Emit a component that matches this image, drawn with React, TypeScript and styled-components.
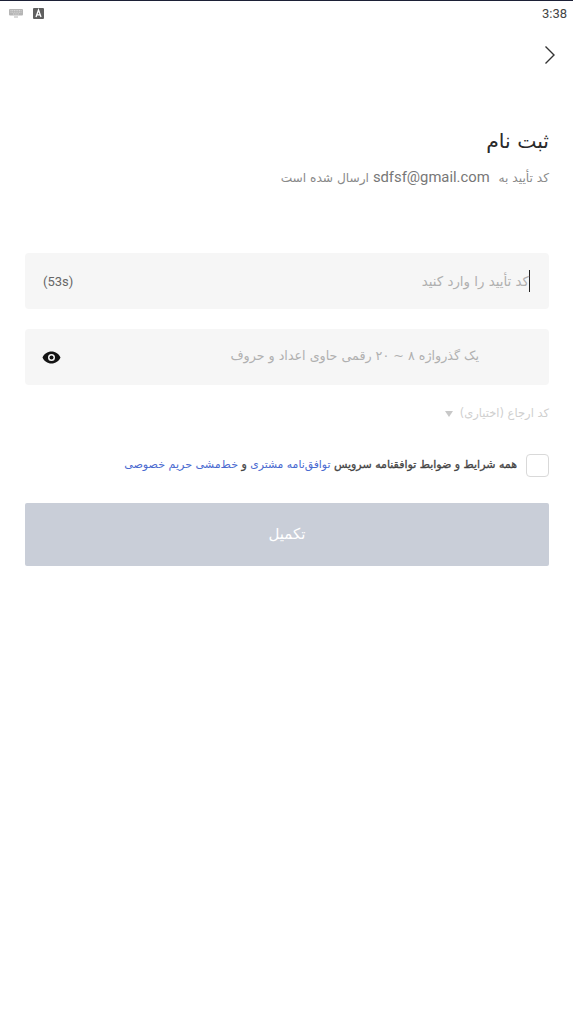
import styled, { createGlobalStyle } from "styled-components";

const GlobalStyle = createGlobalStyle`
  html, body {
    margin: 0;
    padding: 0;
    background: #fff;
  }
  body {
    font-family: Roboto, "DejaVu Sans", sans-serif;
  }
`;

const KeyboardIcon = () => (
  <svg width="14" height="9" viewBox="0 0 14 9" fill="#b5b5b5">
    <rect x="0" y="0" width="14" height="6.5" rx="1" />
    <path d="M1.5 1.5h11M1.5 3.2h11M4 5h6" stroke="#e6e6e6" strokeWidth=".7" strokeDasharray="1 .7" />
    <rect x="5" y="7.5" width="4" height="1" />
  </svg>
);

const InputMethodIcon = () => (
  <svg width="11" height="11" viewBox="0 0 11 11">
    <rect width="11" height="11" rx="1" fill="#5f5f5f" />
    <path d="M3 9 5.5 2 8 9M4 6.8h3" fill="none" stroke="#fff" strokeWidth="1.3" />
  </svg>
);

const ChevronIcon = () => (
  <svg width="12" height="20" viewBox="0 0 12 20" fill="none" stroke="#333" strokeWidth="1.4">
    <path d="M1.5 1.5 10 10l-8.500 8.500" />
  </svg>
);

const EyeIcon = () => (
  <svg width="19" height="13" viewBox="0 0 19 13">
    <path
      fillRule="evenodd"
      fill="#141414"
      d="M9.500.5C13.500.5 17 3 18.500 6.500 17 10 13.500 12.500 9.500 12.500S2 10 .5 6.500C2 3 5.500.5 9.500.5ZM9.500 3a3.500 3.500 0 1 0 0 7 3.500 3.500 0 0 0 0-7Z"
    />
    <circle cx="9.500" cy="6.500" r="2" fill="#141414" />
  </svg>
);

const App = () => {
  return (
    <>
      <GlobalStyle />
      <Page>
        <StatusBar>
          <StatusIcons>
            <KeyboardIcon />
            <InputMethodIcon />
          </StatusIcons>
          <Clock>3:38</Clock>
        </StatusBar>
        <BackRow>
          <ChevronIcon />
        </BackRow>
        <Content>
          <Title dir="rtl">ثبت نام</Title>
          <Subtitle dir="rtl">
            کد تأیید به <Email>sdfsf@gmail.com</Email> ارسال شده است
          </Subtitle>
          <CodeField>
            <Countdown>(53s)</Countdown>
            <CodePlaceholder dir="rtl">
              <Caret />
              کد تأیید را وارد کنید
            </CodePlaceholder>
          </CodeField>
          <PasswordField>
            <EyeIcon />
            <PasswordPlaceholder dir="rtl">
              یک گذرواژه ۸ ~ ۲۰ رقمی حاوی اعداد و حروف
            </PasswordPlaceholder>
          </PasswordField>
          <Referral dir="rtl">
            کد ارجاع (اختیاری) <Arrow />
          </Referral>
          <TermsRow dir="rtl">
            <Checkbox />
            <TermsText>
              همه شرایط و ضوابط توافقنامه سرویس <TermsLink>توافق‌نامه مشتری</TermsLink> و{" "}
              <TermsLink $large>خط‌مشی حریم خصوصی</TermsLink>
            </TermsText>
          </TermsRow>
          <SubmitButton type="button">تکمیل</SubmitButton>
        </Content>
      </Page>
    </>
  );
};

export default App;

const Page = styled.div`
  width: 573px;
  height: 1024px;
  overflow: hidden;
  background: #fff;
  border-top: 1px solid #1c2036;
  box-sizing: border-box;
`;

const StatusBar = styled.div`
  display: flex;
  justify-content: space-between;
  align-items: center;
  height: 24px;
  padding: 0 6px 0 9px;
`;

const StatusIcons = styled.div`
  display: flex;
  align-items: center;
  gap: 10px;
`;

const Clock = styled.span`
  font-size: 13px;
  color: #444;
`;

const BackRow = styled.div`
  display: flex;
  justify-content: flex-end;
  padding: 20px 17px 0 0;
  height: 42px;
  box-sizing: content-box;
`;

const Content = styled.div`
  display: flex;
  flex-direction: column;
  padding: 0 24px 0 25px;
  margin-top: 39px;
`;

const Title = styled.h1`
  margin: 0;
  font-family: "DejaVu Sans", sans-serif;
  font-size: 20.4px;
  font-weight: 400;
  line-height: 30px;
  color: #2a2a2a;
`;

const Subtitle = styled.div`
  margin-top: 11px;
  font-family: "DejaVu Sans", sans-serif;
  font-size: 12.2px;
  line-height: 20px;
  color: #8a8a8a;
`;

const Email = styled.span`
  margin-right: 5px;
  font-family: Roboto, sans-serif;
  font-size: 14.8px;
  color: #777;
`;

const Field = styled.div`
  display: flex;
  align-items: center;
  justify-content: space-between;
  height: 56px;
  padding: 0 18px;
  background: #f6f6f6;
  border-radius: 4px;
`;

const CodeField = styled(Field)`
  margin-top: 65px;
  padding-right: 19px;
`;

const PasswordField = styled(Field)`
  margin-top: 20px;
  padding-left: 17px;
  padding-right: 70px;
`;

const Countdown = styled.span`
  font-size: 13px;
  color: #666;
`;

const Placeholder = styled.span`
  font-family: "DejaVu Sans", sans-serif;
  color: #b0b0b0;
`;

const CodePlaceholder = styled(Placeholder)`
  display: flex;
  align-items: center;
  font-size: 13.4px;
`;

const PasswordPlaceholder = styled(Placeholder)`
  padding-bottom: 4px;
  font-size: 12.7px;
`;

const Caret = styled.i`
  display: block;
  width: 1px;
  height: 22px;
  background: #222;
`;

const Referral = styled.div`
  margin-top: 19px;
  font-family: "DejaVu Sans", sans-serif;
  font-size: 11.5px;
  line-height: 18px;
  color: #cfcfcf;
`;

const Arrow = styled.i`
  display: inline-block;
  margin-right: 3px;
  width: 0;
  height: 0;
  border-left: 4px solid transparent;
  border-right: 4px solid transparent;
  border-top: 6px solid #c8c8c8;
`;

const TermsRow = styled.div`
  display: flex;
  align-items: center;
  gap: 9px;
  margin-top: 32px;
`;

const Checkbox = styled.span`
  flex: none;
  width: 21px;
  height: 21px;
  background: #fff;
  border: 1px solid #d9d9d9;
  border-radius: 4px;
`;

const TermsText = styled.span`
  padding-bottom: 3px;
  font-family: "DejaVu Sans", sans-serif;
  font-size: 11px;
  -webkit-text-stroke: 0.3px #444;
  white-space: nowrap;
  color: #444;
`;

const TermsLink = styled.span<{ $large?: boolean }>`
  font-size: ${(p) => (p.$large ? "11.1px" : "10.8px")};
  -webkit-text-stroke: 0;
  color: #4a6ad0;
`;

const SubmitButton = styled.button`
  margin-top: 26px;
  padding-bottom: 3px;
  height: 63px;
  border: none;
  border-radius: 2px;
  background: #c9ced8;
  font-family: "DejaVu Sans", sans-serif;
  font-size: 15px;
  color: #fff;
`;
